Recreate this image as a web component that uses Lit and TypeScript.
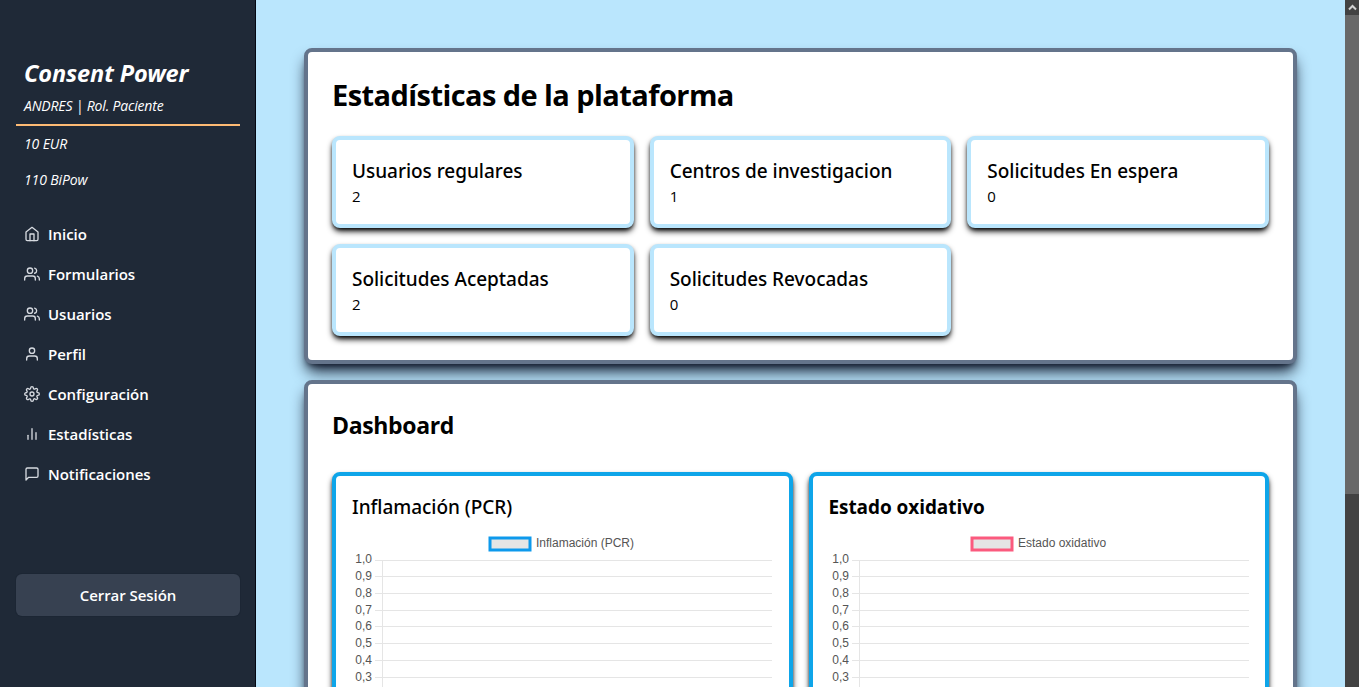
import { LitElement, html, svg, css } from "lit";
import { customElement, property } from "lit/decorators.js";

const ICONS: Record<string, unknown> = {
  home: svg`<path d="M3 9l9-7 9 7v11a2 2 0 0 1-2 2H5a2 2 0 0 1-2-2z"/><polyline points="9 22 9 12 15 12 15 22"/>`,
  users: svg`<path d="M17 21v-2a4 4 0 0 0-4-4H5a4 4 0 0 0-4 4v2"/><circle cx="9" cy="7" r="4"/><path d="M23 21v-2a4 4 0 0 0-3-3.87"/><path d="M16 3.13a4 4 0 0 1 0 7.75"/>`,
  user: svg`<path d="M20 21v-2a4 4 0 0 0-4-4H8a4 4 0 0 0-4 4v2"/><circle cx="12" cy="7" r="4"/>`,
  settings: svg`<circle cx="12" cy="12" r="3"/><path d="M19.4 15a1.65 1.65 0 0 0 .33 1.82l.06.06a2 2 0 0 1 0 2.83 2 2 0 0 1-2.83 0l-.06-.06a1.65 1.65 0 0 0-1.82-.33 1.65 1.65 0 0 0-1 1.51V21a2 2 0 0 1-2 2 2 2 0 0 1-2-2v-.09A1.65 1.65 0 0 0 9 19.4a1.65 1.65 0 0 0-1.82.33l-.06.06a2 2 0 0 1-2.83 0 2 2 0 0 1 0-2.83l.06-.06a1.65 1.65 0 0 0 .33-1.82 1.65 1.65 0 0 0-1.51-1H3a2 2 0 0 1-2-2 2 2 0 0 1 2-2h.09A1.65 1.65 0 0 0 4.6 9a1.65 1.65 0 0 0-.33-1.82l-.06-.06a2 2 0 0 1 0-2.83 2 2 0 0 1 2.83 0l.06.06a1.65 1.65 0 0 0 1.82.33H9a1.65 1.65 0 0 0 1-1.51V3a2 2 0 0 1 2-2 2 2 0 0 1 2 2v.09a1.65 1.65 0 0 0 1 1.51 1.65 1.65 0 0 0 1.82-.33l.06-.06a2 2 0 0 1 2.83 0 2 2 0 0 1 0 2.83l-.06.06a1.65 1.65 0 0 0-.33 1.82V9a1.65 1.65 0 0 0 1.51 1H21a2 2 0 0 1 2 2 2 2 0 0 1-2 2h-.09a1.65 1.65 0 0 0-1.51 1z"/>`,
  bars: svg`<line x1="18" y1="20" x2="18" y2="10"/><line x1="12" y1="20" x2="12" y2="4"/><line x1="6" y1="20" x2="6" y2="14"/>`,
  message: svg`<path d="M21 15a2 2 0 0 1-2 2H7l-4 4V5a2 2 0 0 1 2-2h14a2 2 0 0 1 2 2z"/>`,
};

const NAV = [
  ["home", "Inicio"],
  ["users", "Formularios"],
  ["users", "Usuarios"],
  ["user", "Perfil"],
  ["settings", "Configuración"],
  ["bars", "Estadísticas"],
  ["message", "Notificaciones"],
];

const STATS: [string, number][] = [
  ["Usuarios regulares", 2],
  ["Centros de investigacion", 1],
  ["Solicitudes En espera", 0],
  ["Solicitudes Aceptadas", 2],
  ["Solicitudes Revocadas", 0],
];

const TICKS = ["1,0", "0,9", "0,8", "0,7", "0,6", "0,5", "0,4", "0,3"];

@customElement("side-bar")
class SideBar extends LitElement {
  static styles = css`
    :host {
      display: flex;
      flex-direction: column;
      box-sizing: border-box;
      width: 256px;
      flex: none;
      height: 100%;
      padding: 55px 15px 0 16px;
      background: #1f2937;
      border-right: 1px solid #030712;
      color: #fff;
      white-space: nowrap;
    }
    .brand {
      margin: 0;
      padding: 1px 8px 0;
      height: 35px;
      font-family: "Noto Sans", "Open Sans", sans-serif;
      font-size: 23.5px;
      line-height: 35px;
      font-weight: 700;
      font-style: italic;
      letter-spacing: -0.1px;
    }
    .role {
      margin: 0;
      padding: 5px 8px 8px;
      font-size: 14px;
      line-height: 20px;
      font-style: italic;
      letter-spacing: -0.17px;
      border-bottom: 2px solid #fdba74;
      height: 20px;
    }
    .funds {
      padding: 8px 9px 0 8px;
      font-size: 14px;
      line-height: 20px;
      font-style: italic;
      letter-spacing: -0.12px;
    }
    .funds + .funds {
      padding-top: 16px;
    }
    .menu {
      display: flex;
      flex-direction: column;
      margin: 24px 0 0;
      padding: 0;
      list-style: none;
    }
    .entry {
      display: flex;
      align-items: center;
      gap: 8px;
      height: 40px;
      padding-left: 8px;
      font-size: 15px;
      font-weight: 600;
      letter-spacing: -0.03px;
    }
    .icon {
      width: 16px;
      height: 16px;
      fill: none;
      stroke: #d6dae0;
      stroke-width: 2;
      stroke-linecap: round;
      stroke-linejoin: round;
    }
    .logout {
      margin: 80px 0 0;
      height: 42px;
      padding: 0;
      border: 0;
      border-radius: 6px;
      background: #374151;
      box-shadow: 0 0 0 1px #1c2634;
      color: #fff;
      font: 600 15px "Open Sans", "Noto Sans", sans-serif;
      letter-spacing: -0.05px;
    }
  `;
  render() {
    return html`
      <h1 class="brand">Consent Power</h1>
      <p class="role">ANDRES | Rol. Paciente</p>
      <div class="funds">10 EUR</div>
      <div class="funds">110 BiPow</div>
      <ul class="menu">
        ${NAV.map(([icon, label]) => html`<li class="entry"><svg class="icon" viewBox="0 0 24 24">${ICONS[icon]}</svg><span>${label}</span></li>`)}
      </ul>
      <button class="logout">Cerrar Sesión</button>
    `;
  }
}

@customElement("line-chart")
class LineChart extends LitElement {
  @property() label = "";
  @property() color = "";
  @property({ type: Number }) legendX = 0;
  static styles = css`
    :host {
      display: block;
    }
    .plot {
      display: block;
      width: 100%;
      height: 220px;
      overflow: visible;
      font-family: "Liberation Sans", Arial, sans-serif;
      font-size: 12px;
    }
    .text {
      fill: #555;
    }
    .tick {
      text-anchor: end;
    }
    .grid {
      stroke: #e5e5e5;
      stroke-width: 1;
      shape-rendering: crispEdges;
    }
    .swatch {
      fill: #e5e5e5;
      stroke-width: 3;
    }
  `;
  render() {
    const y = (i: number) => Math.floor(40 + i * 16.72) + 0.5;
    return html`<svg class="plot">
      <rect class="swatch" x=${this.legendX + 1.5} y="18" width="40" height="12" stroke=${this.color}></rect>
      <text class="text" x=${this.legendX + 47.5} y="27">${this.label}</text>
      ${TICKS.map((t, i) => svg`<line class="grid" x1="23" x2="420" y1=${y(i)} y2=${y(i)}></line><text class="text tick" x="20" y=${y(i) + (i ? 3 : 2.5)}>${t}</text>`)}
      <line class="grid" x1="30.5" x2="30.5" y1="40" y2="208"></line>
    </svg>`;
  }
}

@customElement("app-root")
class AppRoot extends LitElement {
  static styles = css`
    :host {
      display: flex;
      width: 100%;
      height: 687px;
      overflow: hidden;
      background: #bae6fd;
      color: #000;
      font-family: "Open Sans", "Noto Sans", sans-serif;
    }
    .main {
      flex: 1;
      min-width: 0;
      box-sizing: border-box;
      padding: 48px;
      display: flex;
      flex-direction: column;
      gap: 16px;
    }
    .panel {
      flex: none;
      box-sizing: border-box;
      padding: 24px;
      background: #fff;
      border: 4px solid #64748b;
      border-radius: 8px;
      box-shadow: 0 10px 15px -3px #0f172a, 0 4px 6px -4px #0f172a;
    }
    .title {
      margin: 0 0 24px;
      font-size: 29px;
      line-height: 36px;
      font-weight: 700;
      letter-spacing: -0.57px;
      padding-top: 1px;
      height: 35px;
    }
    .subtitle {
      margin: 0 0 32px;
      font-size: 23px;
      line-height: 32px;
      font-weight: 700;
      letter-spacing: -0.35px;
      padding-top: 1px;
      height: 31px;
    }
    .stats {
      display: grid;
      grid-template-columns: repeat(3, 1fr);
      gap: 16px;
    }
    .charts {
      display: grid;
      grid-template-columns: repeat(2, 1fr);
      gap: 16px;
    }
    .card {
      box-sizing: border-box;
      min-width: 0;
      padding: 16px;
      background: #fff;
      border: 4px solid #bae6fd;
      border-radius: 8px;
      box-shadow: 0 4px 6px -1px #000, 0 2px 4px -2px #000;
    }
    .chart {
      border-color: #0ea5e9;
    }
    .heading {
      margin: 0;
      padding-top: 1px;
      height: 27px;
      font-family: "Noto Sans", "Open Sans", sans-serif;
      font-size: 19px;
      line-height: 28px;
      font-weight: 500;
      letter-spacing: -0.03px;
      white-space: nowrap;
    }
    .strong {
      font-family: "Open Sans", "Noto Sans", sans-serif;
      font-weight: 700;
      letter-spacing: -0.07px;
    }
    .value {
      margin: 0;
      font-size: 15px;
      line-height: 24px;
    }
    .scroll {
      flex: none;
      width: 14px;
      display: flex;
      flex-direction: column;
      background: #424242;
    }
    .arrow {
      display: block;
      width: 14px;
      height: 15px;
      fill: none;
      stroke: #d0d0d0;
      stroke-width: 2;
    }
    .thumb {
      height: 479px;
      background: #686868;
    }
  `;
  render() {
    return html`
      <side-bar></side-bar>
      <main class="main">
        <section class="panel">
          <h2 class="title">Estadísticas de la plataforma</h2>
          <div class="stats">
            ${STATS.map(([name, value]) => html`<article class="card"><h3 class="heading">${name}</h3><p class="value">${value}</p></article>`)}
          </div>
        </section>
        <section class="panel">
          <h2 class="subtitle">Dashboard</h2>
          <div class="charts">
            <article class="card chart">
              <h3 class="heading">Inflamación (PCR)</h3>
              <line-chart label="Inflamación (PCR)" color="#0d99ec" legendX="136.5"></line-chart>
            </article>
            <article class="card chart">
              <h3 class="heading strong">Estado oxidativo</h3>
              <line-chart label="Estado oxidativo" color="#fb5a7e" legendX="141.5"></line-chart>
            </article>
          </div>
        </section>
      </main>
      <div class="scroll">
        <svg class="arrow" viewBox="0 0 14 15"><path d="M4 9.5L7.5 6L11 9.5"></path></svg>
        <div class="thumb"></div>
      </div>
    `;
  }
}
